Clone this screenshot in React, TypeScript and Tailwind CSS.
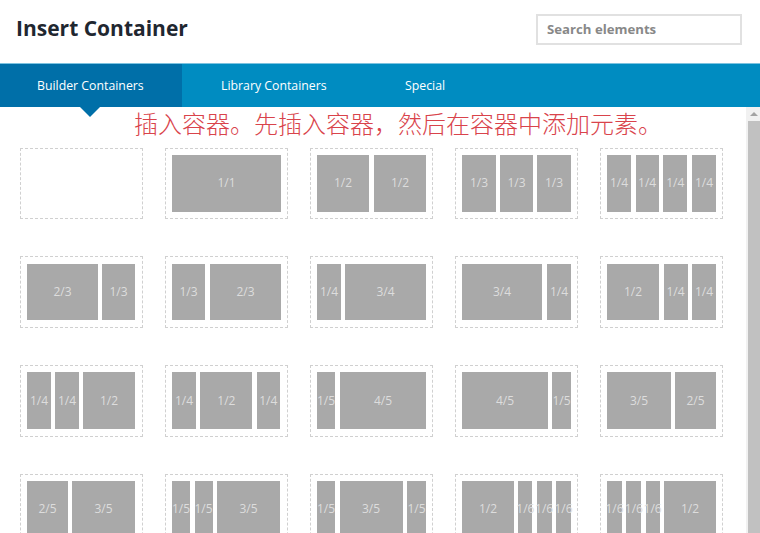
type Cell = [string, string];
type Card = { w: string; cells: Cell[] };

const sans = "font-['Open_Sans','Liberation_Sans',sans-serif]";

const rows: Card[][] = [
  [
    { w: "w-[108px]", cells: [] },
    { w: "w-[109px]", cells: [["w-[109px]", "1/1"]] },
    { w: "w-[109px]", cells: [["w-[52px]", "1/2"], ["w-[52px]", "1/2"]] },
    { w: "w-[109px]", cells: [["w-[34px]", "1/3"], ["w-[33px]", "1/3"], ["w-[34px]", "1/3"]] },
    { w: "w-[109px]", cells: [["w-[24px]", "1/4"], ["w-[23px]", "1/4"], ["w-[24px]", "1/4"], ["w-[24px]", "1/4"]] },
  ],
  [
    { w: "w-[108px]", cells: [["w-[71px]", "2/3"], ["w-[33px]", "1/3"]] },
    { w: "w-[109px]", cells: [["w-[33px]", "1/3"], ["w-[71px]", "2/3"]] },
    { w: "w-[109px]", cells: [["w-[24px]", "1/4"], ["w-[81px]", "3/4"]] },
    { w: "w-[109px]", cells: [["w-[80px]", "3/4"], ["w-[24px]", "1/4"]] },
    { w: "w-[109px]", cells: [["w-[52px]", "1/2"], ["w-[24px]", "1/4"], ["w-[24px]", "1/4"]] },
  ],
  [
    { w: "w-[108px]", cells: [["w-[24px]", "1/4"], ["w-[24px]", "1/4"], ["w-[52px]", "1/2"]] },
    { w: "w-[107.8px]", cells: [["w-[24px]", "1/4"], ["w-[52px]", "1/2"], ["w-[23px]", "1/4"]] },
    { w: "w-[109px]", cells: [["w-[18px]", "1/5"], ["w-[86px]", "4/5"]] },
    { w: "w-[109px]", cells: [["w-[86px]", "4/5"], ["w-[19px]", "1/5"]] },
    { w: "w-[109px]", cells: [["w-[64px]", "3/5"], ["w-[41px]", "2/5"]] },
  ],
  [
    { w: "w-[108px]", cells: [["w-[41px]", "2/5"], ["w-[63px]", "3/5"]] },
    { w: "w-[108px]", cells: [["w-[18px]", "1/5"], ["w-[18px]", "1/5"], ["w-[63px]", "3/5"]] },
    { w: "w-[109px]", cells: [["w-[18px]", "1/5"], ["w-[63px]", "3/5"], ["w-[19px]", "1/5"]] },
    { w: "w-[109px]", cells: [["w-[52px]", "1/2"], ["w-[14px]", "1/6"], ["w-[15px]", "1/6"], ["w-[15px]", "1/6"]] },
    { w: "w-[109px]", cells: [["w-[15px]", "1/6"], ["w-[15px]", "1/6"], ["w-[14px]", "1/6"], ["w-[52px]", "1/2"]] },
  ],
];

function ContainerCard({ card }: { card: Card }) {
  return (
    <div className="w-[123px] h-[71.8px] shrink-0 border border-dashed border-[#d0d0d0] pl-[6px] pt-[6.4px]">
      <div className={`${card.w} h-[56.6px] flex justify-between`}>
        {card.cells.map(([w, label], i) => (
          <div
            key={i}
            className={`${w} h-[56.6px] shrink-0 flex items-center justify-center bg-[#a9a9a9] text-[#dddddd] text-[12px] whitespace-nowrap`}
          >
            {label}
          </div>
        ))}
      </div>
    </div>
  );
}

export default function App() {
  return (
    <div className={`h-[533px] w-[760px] overflow-hidden bg-white flex flex-col ${sans}`}>
      <header className="h-[63px] shrink-0 flex items-center justify-between pl-[16px] pr-[18px]">
        <h1 className="text-[21px] font-bold text-[#1f2730] leading-none pb-[7px] whitespace-nowrap">Insert Container</h1>
        <div className="w-[206px] h-[31px] mb-[4px] border-2 border-[#e1e1e1] flex items-center pl-[9px] pt-[1px] text-[13.2px] font-bold text-[#888888] whitespace-nowrap">
          Search elements
        </div>
      </header>
      <nav className="h-[44px] shrink-0 flex bg-[#008cc1] border-t border-[#7cc3e0] text-[12.3px] text-white whitespace-nowrap">
        <div className="relative w-[182px] flex items-center pl-[37px] pt-[1px] bg-[#006fa8]">
          Builder Containers
          <div className="absolute left-[80px] top-full w-0 h-0 border-x-[10px] border-x-transparent border-t-[10px] border-t-[#006fa8]" />
        </div>
        <div className="w-[145px] flex items-center pl-[39px] pt-[1px]">Library Containers</div>
        <div className="flex items-center pl-[78px] pt-[1px]">Special</div>
      </nav>
      <div className="flex-1 min-h-0 flex">
        <main className="flex-1 min-w-0">
          <p className="h-[40.67px] pl-[134px] text-[24px] leading-[32px] text-[#d9434b] font-['Noto_Sans_CJK_SC',sans-serif] font-light whitespace-nowrap">
            插入容器。先插入容器，然后在容器中添加元素。
          </p>
          <div className="flex flex-col gap-y-[36.87px] pl-[20px]">
            {rows.map((row, r) => (
              <div key={r} className="flex gap-x-[22px]">
                {row.map((card, c) => (
                  <ContainerCard key={c} card={card} />
                ))}
              </div>
            ))}
          </div>
        </main>
        <div className="w-[14px] shrink-0 flex flex-col bg-[#f1f1f1] pl-[2px]">
          <div className="h-[14px] flex items-center justify-center">
            <div className="w-0 h-0 border-x-[4px] border-x-transparent border-b-[4px] border-b-[#a3a3a3]" />
          </div>
          <div className="flex-1 bg-[#c1c1c1]" />
        </div>
      </div>
    </div>
  );
}
